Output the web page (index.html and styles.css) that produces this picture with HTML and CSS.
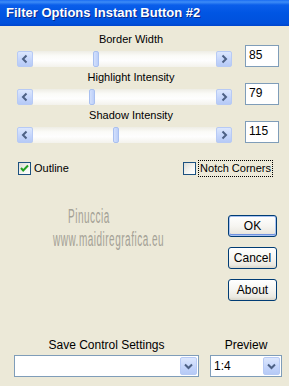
FILE: index.html
```html
<!DOCTYPE html>
<html lang="en">
<head>
	<meta charset="UTF-8">
	<title>Filter Options Instant Button #2</title>
	<link rel="stylesheet" href="styles.css">
</head>
<body>
	<div class="window">
		<div class="titlebar">Filter Options Instant Button #2</div>
		<div class="content">
			<section class="sliders">
				<div class="slider">
					<div class="slider-label">Border Width</div>
					<div class="scrollbar">
						<span class="arrow"><svg width="14" height="14" viewBox="0 0 14 14"><path d="M8.5 3.5 L5 7 L8.5 10.5" fill="none" stroke="#4d6185" stroke-width="2"/></svg></span>
						<span class="track"><span class="thumb" style="margin-left:60px"></span></span>
						<span class="arrow"><svg width="14" height="14" viewBox="0 0 14 14"><path d="M5.5 3.5 L9 7 L5.5 10.5" fill="none" stroke="#4d6185" stroke-width="2"/></svg></span>
					</div>
					<div class="value">85</div>
				</div>
				<div class="slider">
					<div class="slider-label">Highlight Intensity</div>
					<div class="scrollbar">
						<span class="arrow"><svg width="14" height="14" viewBox="0 0 14 14"><path d="M8.5 3.5 L5 7 L8.5 10.5" fill="none" stroke="#4d6185" stroke-width="2"/></svg></span>
						<span class="track"><span class="thumb" style="margin-left:56px"></span></span>
						<span class="arrow"><svg width="14" height="14" viewBox="0 0 14 14"><path d="M5.5 3.5 L9 7 L5.5 10.5" fill="none" stroke="#4d6185" stroke-width="2"/></svg></span>
					</div>
					<div class="value">79</div>
				</div>
				<div class="slider">
					<div class="slider-label">Shadow Intensity</div>
					<div class="scrollbar">
						<span class="arrow"><svg width="14" height="14" viewBox="0 0 14 14"><path d="M8.5 3.5 L5 7 L8.5 10.5" fill="none" stroke="#4d6185" stroke-width="2"/></svg></span>
						<span class="track"><span class="thumb" style="margin-left:80px"></span></span>
						<span class="arrow"><svg width="14" height="14" viewBox="0 0 14 14"><path d="M5.5 3.5 L9 7 L5.5 10.5" fill="none" stroke="#4d6185" stroke-width="2"/></svg></span>
					</div>
					<div class="value">115</div>
				</div>
			</section>

			<section class="checks">
				<label class="check">
					<span class="box"><svg width="11" height="11" viewBox="0 0 11 11"><path d="M2 5 L4.2 7.5 L9 2.5" fill="none" stroke="#21a121" stroke-width="2"/></svg></span>
					<span>Outline</span>
				</label>
				<label class="check notch">
					<span class="box"></span>
					<span class="focus">Notch Corners</span>
				</label>
			</section>

			<section class="middle">
				<div class="watermark">
					<div class="wm-line">Pinuccia</div>
					<div class="wm-line">www.maidiregrafica.eu</div>
				</div>
				<div class="buttons">
					<button class="btn default">OK</button>
					<button class="btn">Cancel</button>
					<button class="btn">About</button>
				</div>
			</section>

			<section class="bottom">
				<div class="field save">
					<div class="field-label">Save Control Settings</div>
					<div class="combo">
						<span class="combo-text"></span>
						<span class="drop"><svg width="15" height="18" viewBox="0 0 15 18"><path d="M4 7.5 L7.5 11 L11 7.5" fill="none" stroke="#4d6185" stroke-width="2"/></svg></span>
					</div>
				</div>
				<div class="field preview">
					<div class="field-label">Preview</div>
					<div class="combo">
						<span class="combo-text">1:4</span>
						<span class="drop"><svg width="15" height="18" viewBox="0 0 15 18"><path d="M4 7.5 L7.5 11 L11 7.5" fill="none" stroke="#4d6185" stroke-width="2"/></svg></span>
					</div>
				</div>
			</section>
		</div>
	</div>
</body>
</html>
```

FILE: styles.css
```css
body{
	margin: 0;
	background-color: #ece9d8;
	font-family: "Liberation Sans", Arial, sans-serif;
	font-size: 11px;
	color: #000;
}
.window{
	width: 289px;
	height: 386px;
	overflow: hidden;
}
.titlebar{
	height: 26px;
	line-height: 26px;
	padding-left: 6px;
	color: #fff;
	font-size: 13px;
	font-weight: bold;
	text-shadow: 1px 1px #0a2a8c;
	background: linear-gradient(#1a6cf2 0, #3d8cf7 2px, #0a5eea 5px, #0055e3 50%, #0050dc 90%, #0045cc 100%);
	white-space: nowrap;
}
.content{
	padding: 7px 10px 0 17px;
}

/* sliders */
.sliders{
	display: flex;
	flex-direction: column;
	gap: 4px;
}
.slider{
	display: grid;
	grid-template-columns: 215px 13px 34px;
	grid-template-rows: 13px 16px;
	row-gap: 5px;
}
.slider-label{
	grid-column: 1 / 3;
	grid-row: 1;
	text-align: center;
	line-height: 13px;
}
.scrollbar{
	grid-column: 1;
	grid-row: 2;
	display: flex;
	height: 16px;
}
.arrow{
	width: 16px;
	height: 16px;
	box-sizing: border-box;
	border: 1px solid #b7caf5;
	border-radius: 2px;
	background: linear-gradient(#dce7fd, #c3d4fb 60%, #b6caf6);
	display: flex;
	align-items: center;
	justify-content: center;
}
.track{
	flex: 1;
	display: flex;
	background: linear-gradient(#eeede5, #fbfbf8 30%, #fefefe 60%, #f3f2ec);
}
.thumb{
	width: 6px;
	height: 16px;
	box-sizing: border-box;
	border: 1px solid #a9c0f0;
	border-radius: 2px;
	background: linear-gradient(to right, #d3e0fc, #bccff9);
}
.value{
	grid-column: 3;
	grid-row: 1 / 3;
	align-self: end;
	height: 22px;
	box-sizing: border-box;
	border: 1px solid #7f9db9;
	background-color: #fff;
	padding: 2px 0 0 3px;
	font-size: 12px;
	line-height: 14px;
}

/* checkboxes */
.checks{
	display: flex;
	justify-content: space-between;
	margin: 17px 6px 0 1px;
	height: 17px;
	line-height: 15px;
}
.check{
	display: flex;
	align-items: center;
	gap: 3px;
}
.notch{
	gap: 2px;
}
.box{
	width: 13px;
	height: 13px;
	box-sizing: border-box;
	border: 1px solid #1c5180;
	background: linear-gradient(135deg, #dcdcd5, #f6f6f3 60%, #fff);
	display: flex;
	align-items: center;
	justify-content: center;
}
.focus{
	border: 1px dotted #000;
	padding: 0 1px;
	line-height: 15px;
}

/* watermark and buttons */
.middle{
	display: flex;
	margin-top: 28px;
}
.watermark{
	width: 144px;
	text-align: center;
	color: #a4a196;
	font-size: 20px;
	line-height: 23px;
}
.wm-line{
	transform: scaleX(0.5);
	letter-spacing: 1px;
	white-space: nowrap;
}
.buttons{
	margin-left: auto;
	margin-right: 2px;
	padding-top: 10px;
	display: flex;
	flex-direction: column;
	gap: 10px;
}
.btn{
	width: 49px;
	height: 22px;
	box-sizing: border-box;
	border: 1px solid #003c74;
	border-radius: 3px;
	background: linear-gradient(#fff, #f6f5f1 50%, #ebe9e1 85%, #d8d4c8);
	font-family: "Liberation Sans", Arial, sans-serif;
	font-size: 12px;
	color: #000;
	padding: 0;
}
.btn.default{
	box-shadow: inset 0 0 0 1px #a9c3f1, inset 0 -1px 0 1px #6f92e0;
}

/* bottom combos */
.bottom{
	display: flex;
	gap: 11px;
	margin: 38px -3px 0 -3px;
}
.save{
	width: 185px;
}
.preview{
	width: 72px;
}
.field-label{
	text-align: center;
	line-height: 13px;
	font-size: 12px;
}
.combo{
	margin-top: 3px;
	height: 22px;
	box-sizing: border-box;
	border: 1px solid #7f9db9;
	background-color: #fff;
	display: flex;
	padding: 1px;
}
.combo-text{
	flex: 1;
	padding-left: 2px;
	line-height: 18px;
	font-size: 12px;
}
.drop{
	width: 17px;
	height: 18px;
	box-sizing: border-box;
	border: 1px solid #b7caf5;
	border-radius: 2px;
	background: linear-gradient(#dce7fd, #c3d4fb 60%, #b6caf6);
	display: flex;
	align-items: center;
	justify-content: center;
}
```
